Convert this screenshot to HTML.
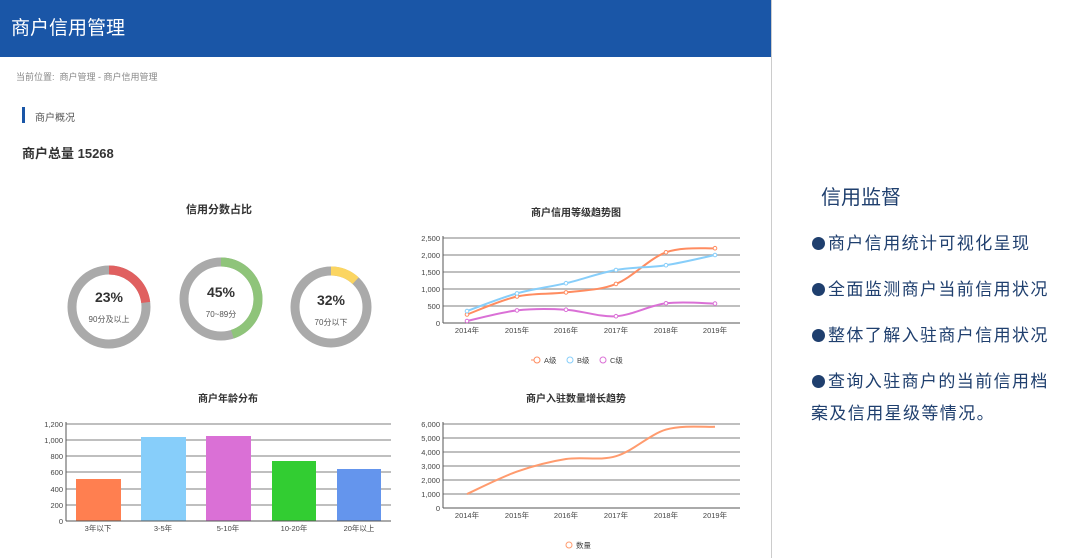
<!DOCTYPE html>
<html><head><meta charset="utf-8"><style>
body{margin:0;width:1080px;height:558px;overflow:hidden;background:#fff;font-family:"Liberation Sans","Noto Sans CJK SC",sans-serif;position:relative}
.hd{position:absolute;left:0;top:0;width:771px;height:57px;background:#1a56a7;color:#fff;font-size:19px;line-height:57px;padding-left:11px;box-sizing:border-box}
.vl{position:absolute;left:771px;top:0;width:1px;height:558px;background:#ccc}
.t{position:absolute;white-space:nowrap}
.r{position:absolute;left:812px;color:#1f3f6e;font-size:17px;letter-spacing:1.4px;white-space:nowrap}
.b{display:inline-block;width:13px;height:13px;border-radius:50%;background:#1f3f6e;margin-right:3px;vertical-align:-1px}
</style></head><body>
<div class="hd">商户信用管理</div>
<div class="vl"></div>
<div class="t" style="left:16px;top:70px;font-size:9px;color:#888">当前位置:&nbsp; 商户管理 - 商户信用管理</div>
<div style="position:absolute;left:22px;top:107px;width:3px;height:16px;background:#1a56a7"></div>
<div class="t" style="left:35px;top:109px;font-size:10px;color:#555">商户概况</div>
<div class="t" style="left:22px;top:143px;font-size:13px;font-weight:bold;color:#333">商户总量 15268</div>
<svg style="position:absolute;left:0;top:0" width="771" height="558" font-family="Liberation Sans,Noto Sans CJK SC,sans-serif">
<g font-size="11" font-weight="bold" fill="#333" text-anchor="middle">
<text x="219" y="213">信用分数占比</text>
<text x="576" y="216" font-size="10">商户信用等级趋势图</text>
<text x="228" y="402" font-size="10">商户年龄分布</text>
<text x="576" y="402" font-size="10">商户入驻数量增长趋势</text>
</g>
<g fill="none" stroke-width="9">
<circle cx="109" cy="307" r="37" stroke="#aaa"/><path d="M109 270 A37 37 0 0 1 145.7 302.4" stroke="#e06060"/>
<circle cx="221" cy="299" r="37" stroke="#aaa"/><path d="M221 262 A37 37 0 0 1 232.4 334.2" stroke="#8fc47a"/>
<circle cx="331" cy="307" r="36" stroke="#aaa"/><path d="M331 271 A36 36 0 0 1 355.6 280.7" stroke="#fbd561"/>
</g>
<g text-anchor="middle" fill="#333">
<text x="109" y="302" font-size="14" font-weight="bold">23%</text><text x="109" y="322" font-size="8" fill="#555">90分及以上</text>
<text x="221" y="297" font-size="14" font-weight="bold">45%</text><text x="221" y="317" font-size="8" fill="#555">70~89分</text>
<text x="331" y="305" font-size="14" font-weight="bold">32%</text><text x="331" y="325" font-size="8" fill="#555">70分以下</text>
</g>
<!-- chart1 -->
<g stroke="#aaa" stroke-width="1.5"><line x1="443" x2="740" y1="238" y2="238"/><line x1="443" x2="740" y1="255" y2="255"/><line x1="443" x2="740" y1="272" y2="272"/><line x1="443" x2="740" y1="289" y2="289"/><line x1="443" x2="740" y1="306" y2="306"/></g>
<line x1="443" x2="740" y1="323" y2="323" stroke="#555"/><line x1="443" x2="443" y1="236" y2="323" stroke="#555"/>
<g font-size="7.5" fill="#444" text-anchor="end"><text x="440" y="241">2,500</text><text x="440" y="258">2,000</text><text x="440" y="275">1,500</text><text x="440" y="292">1,000</text><text x="440" y="309">500</text><text x="440" y="326">0</text></g>
<g font-size="7.5" fill="#444" text-anchor="middle"><text x="467" y="333">2014年</text><text x="517" y="333">2015年</text><text x="566" y="333">2016年</text><text x="616" y="333">2017年</text><text x="666" y="333">2018年</text><text x="715" y="333">2019年</text></g>
<g fill="none" stroke-width="2">
<path stroke="#ff8c60" d="M467 314.5C475.3 311.5 500.5 300.2 517 296.5C533.5 292.8 549.5 294.5 566 292.4C582.5 290.3 599.3 290.6 616 283.9C632.7 277.2 649.5 258.3 666 252.3C682.5 246.4 706.8 248.9 715 248.2"/>
<path stroke="#87cefa" d="M467 311.1C475.3 308.1 500.5 298 517 293.4C533.5 288.8 549.5 287.1 566 283.2C582.5 279.3 599.3 273 616 270C632.7 267 649.5 267.7 666 265.2C682.5 262.7 706.8 256.7 715 255"/>
<path stroke="#da70d6" d="M467 321C475.3 319.2 500.5 312.3 517 310.4C533.5 308.5 549.5 308.7 566 309.7C582.5 310.7 599.3 317.3 616 316.2C632.7 315.1 649.5 305.4 666 303.3C682.5 301.2 706.8 303.5 715 303.6"/>
</g>
<g fill="#fff" stroke-width="1">
<g stroke="#ff8c60"><circle cx="467" cy="314.5" r="1.8"/><circle cx="517" cy="296.5" r="1.8"/><circle cx="566" cy="292.4" r="1.8"/><circle cx="616" cy="283.9" r="1.8"/><circle cx="666" cy="252.3" r="1.8"/><circle cx="715" cy="248.2" r="1.8"/></g>
<g stroke="#87cefa"><circle cx="467" cy="311.1" r="1.8"/><circle cx="517" cy="293.4" r="1.8"/><circle cx="566" cy="283.2" r="1.8"/><circle cx="616" cy="270" r="1.8"/><circle cx="666" cy="265.2" r="1.8"/><circle cx="715" cy="255" r="1.8"/></g>
<g stroke="#da70d6"><circle cx="467" cy="321" r="1.8"/><circle cx="517" cy="310.4" r="1.8"/><circle cx="566" cy="309.7" r="1.8"/><circle cx="616" cy="316.2" r="1.8"/><circle cx="666" cy="303.3" r="1.8"/><circle cx="715" cy="303.6" r="1.8"/></g>
</g>
<g font-size="7.5" fill="#444"><circle cx="537" cy="360" r="3" fill="#fff" stroke="#ff8c60"/><line x1="531" x2="534" y1="360" y2="360" stroke="#ff8c60"/><text x="544" y="363">A级</text>
<circle cx="570" cy="360" r="3" fill="#fff" stroke="#87cefa"/><text x="577" y="363">B级</text>
<circle cx="603" cy="360" r="3" fill="#fff" stroke="#da70d6"/><text x="610" y="363">C级</text></g>
<!-- chart2 -->
<g stroke="#aaa" stroke-width="1.5"><line x1="443" x2="740" y1="424" y2="424"/><line x1="443" x2="740" y1="438" y2="438"/><line x1="443" x2="740" y1="452" y2="452"/><line x1="443" x2="740" y1="466" y2="466"/><line x1="443" x2="740" y1="480" y2="480"/><line x1="443" x2="740" y1="494" y2="494"/></g>
<line x1="443" x2="740" y1="508" y2="508" stroke="#555"/><line x1="443" x2="443" y1="422" y2="508" stroke="#555"/>
<g font-size="7.5" fill="#444" text-anchor="end"><text x="440" y="427">6,000</text><text x="440" y="441">5,000</text><text x="440" y="455">4,000</text><text x="440" y="469">3,000</text><text x="440" y="483">2,000</text><text x="440" y="497">1,000</text><text x="440" y="511">0</text></g>
<g font-size="7.5" fill="#444" text-anchor="middle"><text x="467" y="518">2014年</text><text x="517" y="518">2015年</text><text x="566" y="518">2016年</text><text x="616" y="518">2017年</text><text x="666" y="518">2018年</text><text x="715" y="518">2019年</text></g>
<path fill="none" stroke="#ff9b6e" stroke-width="2" d="M467 494C475.3 490.3 500.5 477.4 517 471.6C533.5 465.8 549.5 461.6 566 459C582.5 456.4 599.3 461.1 616 456.2C632.7 451.3 649.5 434.5 666 429.6C682.5 424.7 706.8 427.3 715 426.8"/>
<circle cx="569" cy="545" r="3" fill="#fff" stroke="#ff9b6e"/><text x="576" y="548" font-size="7.5" fill="#444">数量</text>
<!-- bar -->
<g stroke="#aaa" stroke-width="1.5"><line x1="66" x2="391" y1="424" y2="424"/><line x1="66" x2="391" y1="440" y2="440"/><line x1="66" x2="391" y1="456" y2="456"/><line x1="66" x2="391" y1="472" y2="472"/><line x1="66" x2="391" y1="489" y2="489"/><line x1="66" x2="391" y1="505" y2="505"/></g>
<rect x="76" y="479" width="45" height="42" fill="#ff7f50"/>
<rect x="141" y="437" width="45" height="84" fill="#87cefa"/>
<rect x="206" y="436" width="45" height="85" fill="#da70d6"/>
<rect x="272" y="461" width="44" height="60" fill="#32cd32"/>
<rect x="337" y="469" width="44" height="52" fill="#6495ed"/>
<line x1="66" x2="391" y1="521" y2="521" stroke="#555"/><line x1="66" x2="66" y1="422" y2="521" stroke="#555"/>
<g font-size="7.5" fill="#444" text-anchor="end"><text x="63" y="427">1,200</text><text x="63" y="443">1,000</text><text x="63" y="459">800</text><text x="63" y="475">600</text><text x="63" y="492">400</text><text x="63" y="508">200</text><text x="63" y="524">0</text></g>
<g font-size="7.5" fill="#444" text-anchor="middle"><text x="98" y="531">3年以下</text><text x="163" y="531">3-5年</text><text x="228" y="531">5-10年</text><text x="294" y="531">10-20年</text><text x="359" y="531">20年以上</text></g>
</svg>
<div class="t" style="left:821px;top:181px;font-size:20px;color:#1f3f6e">信用监督</div>
<div class="r" style="top:229px"><span class="b"></span>商户信用统计可视化呈现</div>
<div class="r" style="top:275px"><span class="b"></span>全面监测商户当前信用状况</div>
<div class="r" style="top:321px"><span class="b"></span>整体了解入驻商户信用状况</div>
<div class="r" style="top:367px"><span class="b"></span>查询入驻商户的当前信用档</div>
<div class="r" style="top:399px;left:811px">案及信用星级等情况。</div>
</body></html>
